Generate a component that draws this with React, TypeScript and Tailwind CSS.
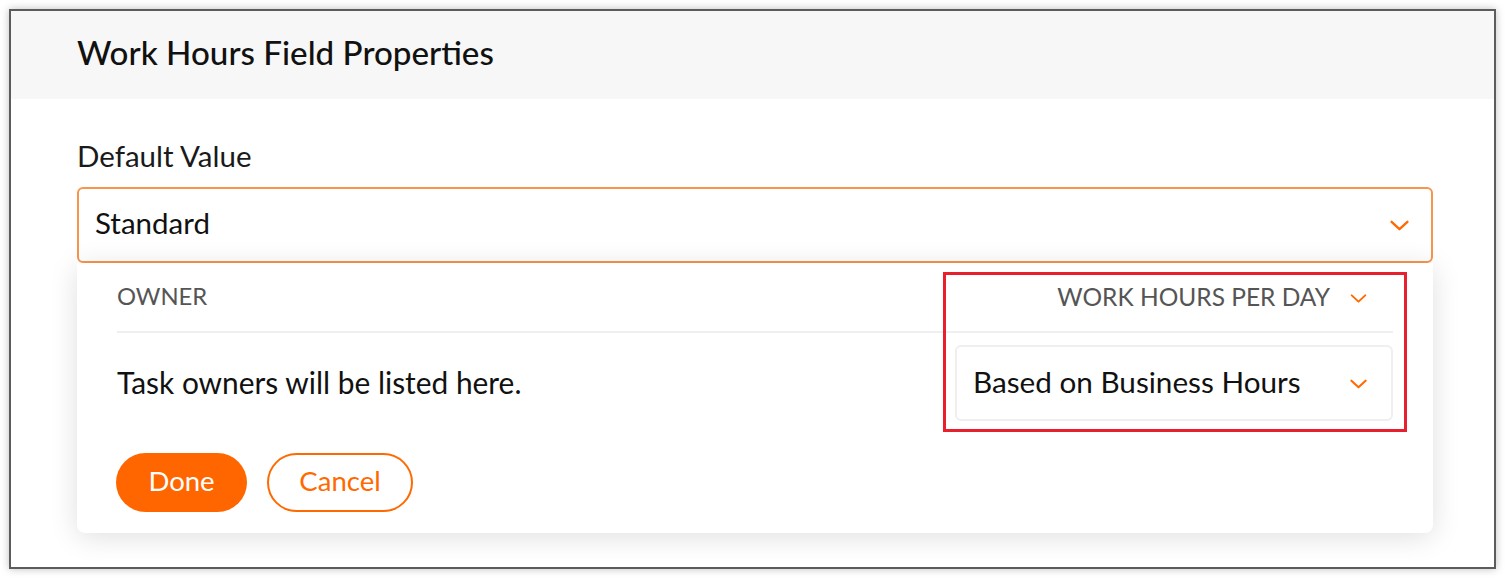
import React from "react";

function Chevron({ className }: { className?: string }) {
  return (
    <svg viewBox="0 0 18 10" className={className} fill="none">
      <path d="M1.5 1.5 L9 8.5 L16.5 1.5" stroke="#ff6a00" strokeWidth="2.2" strokeLinecap="round" strokeLinejoin="round" />
    </svg>
  );
}

export default function App() {
  return (
    <div className="w-[1505px] h-[578px] bg-white p-[9px] font-['Lato','Liberation_Sans',sans-serif]">
      <div className="w-[1487px] h-[560px] border-2 border-[#5c5c5c] bg-white shadow-[0_0_8px_rgba(0,0,0,0.25)] flex flex-col">
        {/* header */}
        <div className="h-[88px] bg-[#f7f7f7] flex items-center pl-[66px] pb-[5px]">
          <h1 className="text-[33.2px] font-medium text-[#111]">Work Hours Field Properties</h1>
        </div>

        <div className="pl-[66px] pr-[61px] pt-[40px] flex flex-col">
          <label className="text-[29.5px] leading-[34px] text-[#1a1a1a] mb-[14px]">Default Value</label>

          <div className="h-[76px] border-2 border-[#f7944e] rounded-[6px] bg-white flex items-center justify-between pl-[16px] pr-[22px]">
            <span className="text-[29.5px] text-[#111] -mt-[3px]">Standard</span>
            <Chevron className="w-[19px] h-[11px] mt-[1px]" />
          </div>

          {/* dropdown panel */}
          <div className="relative h-[270px] bg-white rounded-b-[8px] shadow-[0_4px_28px_rgba(0,0,0,0.13)] px-[40px] flex flex-col">
            <div className="h-[70px] flex items-center justify-between border-b-2 border-[#efefef]">
              <span className="text-[23.8px] text-[#555]">OWNER</span>
              <div className="flex items-center gap-[20px] pr-[26px]">
                <span className="text-[24.5px] text-[#555]">WORK HOURS PER DAY</span>
                <Chevron className="w-[17px] h-[9px] mt-[3px]" />
              </div>
            </div>

            <div className="flex items-center justify-between mt-[12px]">
              <span className="text-[29.9px] text-[#111] -mt-[2px]">Task owners will be listed here.</span>
              <div className="w-[438px] h-[76px] border-2 border-[#efefef] rounded-[6px] flex items-center justify-between pl-[16px] pr-[24px]">
                <span className="text-[29.7px] text-[#111] -mt-[2px]">Based on Business Hours</span>
                <Chevron className="w-[17px] h-[10px] mt-[1px]" />
              </div>
            </div>

            <div className="flex items-center gap-[20px] mt-[32px] -ml-[1px]">
              <button className="w-[131px] h-[59px] rounded-full bg-[#ff6600] text-white text-[27.5px] pb-[3px]">Done</button>
              <button className="w-[146px] h-[59px] rounded-full border-2 border-[#ff6a00] text-[#ff6a00] text-[27.5px] pb-[3px]">Cancel</button>
            </div>

            {/* highlight annotation */}
            <div className="absolute left-[866px] top-[9px] w-[464px] h-[160px] border-[3px] border-[#e8202e] pointer-events-none" />
          </div>
        </div>
      </div>
    </div>
  );
}
